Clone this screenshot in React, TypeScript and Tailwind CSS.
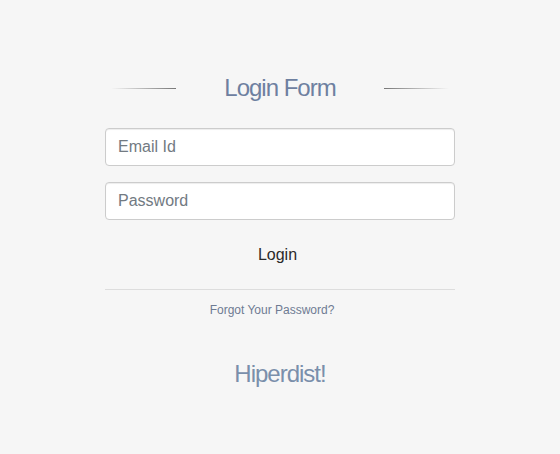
export default function App() {
  return (
    <div className="min-h-screen bg-[#f6f6f6] font-['Liberation_Sans',Arial,sans-serif]">
      <div className="mx-auto w-[350px] pt-[73px]">
        <div className="flex items-center justify-center gap-12">
          <div className="h-px w-[65px] bg-gradient-to-r from-transparent to-[#777]" />
          <h1 className="text-[24px] leading-[30px] tracking-[-1px] text-[#6e80a0]">Login Form</h1>
          <div className="h-px w-[65px] bg-gradient-to-r from-[#777] to-transparent" />
        </div>

        <form className="mt-[25px] flex flex-col">
          <input
            type="email"
            placeholder="Email Id"
            className="h-[38px] w-full rounded border border-[#ccc] bg-white px-3 text-[16px] text-[#555] shadow-[inset_0_1px_1px_rgba(0,0,0,0.075)] outline-none placeholder:text-[#727a82]"
          />
          <input
            type="password"
            placeholder="Password"
            className="mt-4 h-[38px] w-full rounded border border-[#ccc] bg-white px-3 text-[16px] text-[#555] shadow-[inset_0_1px_1px_rgba(0,0,0,0.075)] outline-none placeholder:text-[#727a82]"
          />
          <div className="mt-4 flex justify-center pr-[5px]">
            <button type="button" className="h-[38px] px-4 text-[16px] text-[#2a2a2a]">
              Login
            </button>
          </div>
        </form>

        <hr className="mt-[15px] border-t border-[#ddd]" />
        <p className="mt-[11px] pr-4 text-center text-[12px] leading-[18px] text-[#6e7b93]">Forgot Your Password?</p>

        <p className="mt-10 text-center text-[24px] leading-[30px] tracking-[-1px] text-[#7a8fab]">Hiperdist!</p>
      </div>
    </div>
  );
}
